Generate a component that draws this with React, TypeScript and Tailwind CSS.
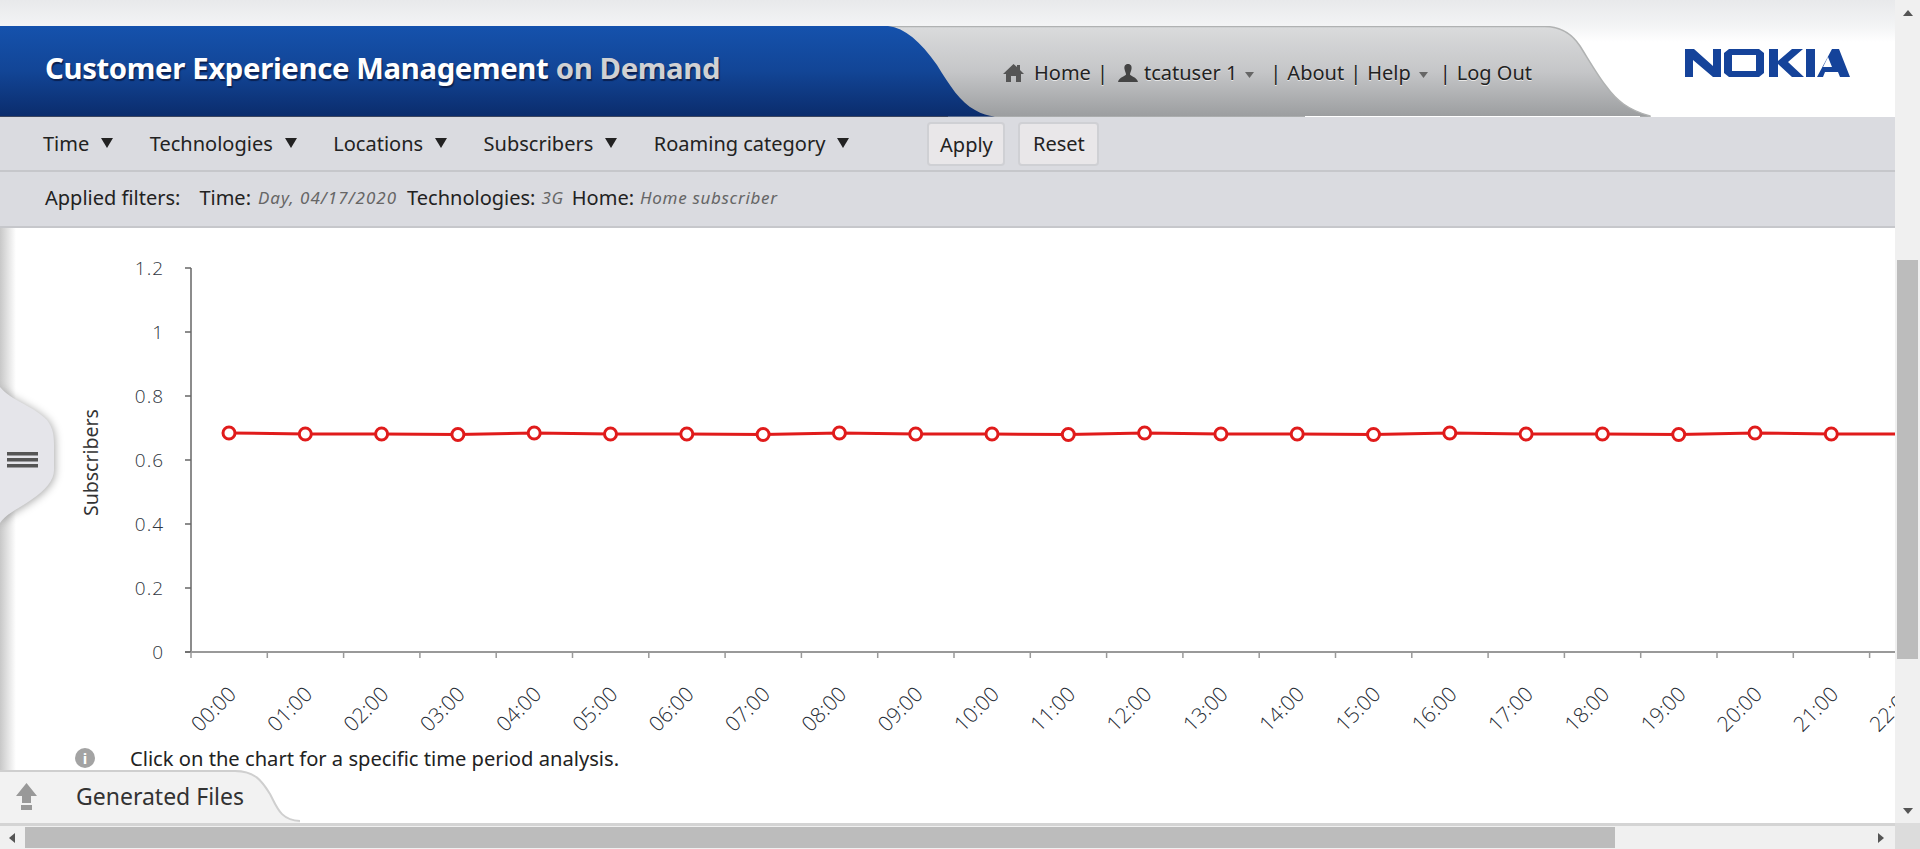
const font = "font-['Noto_Sans','Open_Sans',sans-serif]";

const hours = Array.from({ length: 23 }, (_, i) => `${String(i).padStart(2, "0")}:00`);
const yTicks = ["1.2", "1", "0.8", "0.6", "0.4", "0.2", "0"];
const wobble = [433, 434, 434, 434.5];
const menus = ["Time", "Technologies", "Locations", "Subscribers", "Roaming category"];

function Caret({ small }: { small?: boolean }) {
  return small ? (
    <svg className="ml-2 mt-1" width="9" height="6" viewBox="0 0 9 6">
      <path d="M0 0H9L4.5 6Z" fill="#666" />
    </svg>
  ) : (
    <svg className="ml-3 -mt-0.5" width="12" height="10" viewBox="0 0 12 10">
      <path d="M0 0H12L6 10Z" fill="#222" />
    </svg>
  );
}

function Arrow({ d, className }: { d: string; className?: string }) {
  return (
    <svg className={className} width="12" height="12" viewBox="0 0 12 12">
      <path d={d} fill="#555" />
    </svg>
  );
}

function HeaderShape() {
  return (
    <svg className="absolute inset-0" width="1895" height="91" viewBox="0 0 1895 91">
      <defs>
        <linearGradient id="blue" x1="0" y1="0" x2="0" y2="1">
          <stop offset="0" stopColor="#1552ad" />
          <stop offset="0.5" stopColor="#124596" />
          <stop offset="1" stopColor="#0b2c6c" />
        </linearGradient>
        <linearGradient id="grey" x1="0" y1="0" x2="0" y2="1">
          <stop offset="0" stopColor="#dadbdc" />
          <stop offset="0.5" stopColor="#c5c6c8" />
          <stop offset="1" stopColor="#9b9d9f" />
        </linearGradient>
      </defs>
      <path
        d="M880 .5H1545C1560 .5 1572 8 1580 20C1590 36 1598 50 1606 60C1616 74 1628 84 1650 90V91H880Z"
        fill="url(#grey)"
        stroke="#b0b2b2"
        strokeWidth="1.5"
      />
      <path
        d="M0 0H888C905 2 920 15 937 39C950 60 960 76 975 84C982 88 988 90 995 90.5H0Z"
        fill="url(#blue)"
      />
      <line x1="0" y1="90.5" x2="948" y2="90.5" stroke="#3c4660" />
      <line x1="1305" y1="90.5" x2="1640" y2="90.5" stroke="#fff" />
    </svg>
  );
}

function Chart() {
  const x = (i: number) => 229 + i * 76.3;
  const tick = (i: number) => 191 + i * 76.3;
  return (
    <svg className="block" width="1895" height="518" viewBox="0 228 1895 518">
      <line x1="191" y1="268" x2="191" y2="652" stroke="#666" strokeWidth="1.5" />
      <line x1="185" y1="652" x2="1895" y2="652" stroke="#999" strokeWidth="2" />
      {yTicks.map((t, i) => {
        const y = 268 + i * 64;
        return (
          <g key={t}>
            <line x1="185" y1={y} x2="191" y2={y} stroke="#666" strokeWidth="1.5" />
            <text x="164" y={y + 6.5} textAnchor="end" fontSize="19" letterSpacing="1" fontFamily="Open Sans" fontWeight="300" fill="#2f3640">
              {t}
            </text>
          </g>
        );
      })}
      {hours.map((_, i) => (
        <line key={i} x1={tick(i)} y1="652" x2={tick(i)} y2="658" stroke="#999" strokeWidth="1.5" />
      ))}
      {hours.map((h, i) => (
        <text
          key={h}
          transform={`translate(${tick(i) + 9} 733) rotate(-45)`}
          fontSize="21"
          fontFamily="Open Sans"
          fontWeight="300"
          fill="#262c35"
        >
          {h}
        </text>
      ))}
      <text transform="translate(98 516) rotate(-90)" fontSize="19.5" fontFamily="Noto Sans" fill="#333">
        Subscribers
      </text>
      <polyline
        points={`${hours.map((_, i) => `${x(i)},${wobble[i % 4]}`).join(" ")} 1895,434`}
        fill="none"
        stroke="#e01b1b"
        strokeWidth="3"
      />
      {hours.map((_, i) => (
        <circle key={i} cx={x(i)} cy={wobble[i % 4]} r="6" fill="#fff" stroke="#e01b1b" strokeWidth="3" />
      ))}
    </svg>
  );
}

function SideHandle() {
  return (
    <>
      <div className="absolute left-0 top-[228px] h-[546px] w-[16px] bg-gradient-to-r from-[#c8c8c8] to-transparent" />
      <svg
        className="absolute left-0 top-[380px] drop-shadow-[1px_1px_4px_rgba(0,0,0,0.35)]"
        width="64"
        height="150"
        viewBox="0 0 64 150"
      >
        <path
          d="M0 7C10 20 32 25 47 40C53 48 54 55 54 65V90C54 100 46 110 31 120C16 130 5 135 0 143Z"
          fill="#e5e5ea"
        />
        <rect x="7" y="72" width="31" height="3.5" fill="#555" />
        <rect x="7" y="78" width="31" height="3.5" fill="#555" />
        <rect x="7" y="84" width="31" height="3.5" fill="#555" />
      </svg>
    </>
  );
}

function FilesTab() {
  return (
    <div className="absolute bottom-[26px] left-0 flex h-[53px] w-[310px] items-center">
      <svg className="absolute inset-0" width="310" height="53" viewBox="0 0 310 53">
        <path d="M0 1H235C255 1 262 11 270 24C277 37 280 50 300 51V53H0Z" fill="#f2f2f2" />
        <path d="M0 1H235C255 1 262 11 270 24C277 37 280 50 300 51" fill="none" stroke="#cfcfcf" strokeWidth="2" />
        <path d="M26.5 13L37 26H31V33H22V26H16Z" fill="#999" />
        <rect x="21" y="35" width="11" height="5" fill="#999" />
      </svg>
      <span className="relative ml-[76px] text-[23px] text-[#333]">Generated Files</span>
    </div>
  );
}

export default function App() {
  return (
    <div className={`${font} relative flex h-[849px] w-[1920px] overflow-hidden bg-white text-[#222]`}>
      <div className="relative flex w-[1895px] flex-col">
        <div className="h-[26px] bg-gradient-to-b from-[#e8e9eb] to-[#f3f4f5]" />
        <header className="relative flex h-[91px] items-center bg-[linear-gradient(#f3f4f5,#fff_16px)]">
          <HeaderShape />
          <h1 className="relative mb-[6px] ml-[45px] text-[29.3px] font-bold leading-none tracking-[-0.35px] text-white [text-shadow:1px_2px_1px_#0a2050]">
            Customer Experience Management <span className="text-[#d0d1d3]">on Demand</span>
          </h1>
          <nav className="absolute left-[1003px] top-[37px] flex items-center text-[20px] leading-none text-[#222] [text-shadow:0_1px_0_#e8e8e8]">
            <svg className="mr-[10px]" width="21" height="20" viewBox="0 0 21 20">
              <path d="M10.5 1L14 4V2H17V7L21 11H18V19H13V13H8V19H3V11H0Z" fill="#555" />
            </svg>
            Home <span className="mx-1.5">|</span>
            <svg className="ml-[4px] mr-[6px]" width="20" height="20" viewBox="0 0 20 20">
              <path d="M10 1C13 1 14 3.5 13.5 6C13 8.5 12 10 12 11.5C12 13 19 14 20 19H0C1 14 8 13 8 11.5C8 10 7 8.5 6.5 6C6 3.5 7 1 10 1Z" fill="#444" />
            </svg>
            tcatuser 1 <Caret small />
            <span className="ml-4 mr-1.5">|</span> About <span className="mx-1.5">|</span> Help <Caret small />
            <span className="ml-3 mr-1.5">|</span> Log Out
          </nav>
          <svg className="absolute left-[1685px] top-[23px]" width="165" height="28" viewBox="0 0 165 28">
            <g fill="#15439a">
              <path d="M0 28V0h9l19 17V0h8v28h-8L8 11v17z" />
              <path fillRule="evenodd" d="M44 0h30l5 4v20l-5 4H44l-5-4V4zM47 6v16h24V6z" />
              <path d="M84 0h9v12L107 0h11l-15 13 16 15h-12L93 15v13h-9z" />
              <path d="M121 0h9v28h-9z" />
              <path d="M147 0h7l11 28h-10l-2-5h-13l-2 5h-6zM143 8l-5 10h9z" />
            </g>
          </svg>
        </header>
        <div className="flex h-[55px] items-center border-b-2 border-[#c6c7cb] bg-[#dadbe0] pl-[43px] text-[20px]">
          {menus.map((m, i) => (
            <span key={m} className={`flex items-center ${i > 0 ? "ml-[36.5px]" : ""}`}>
              {m}
              <Caret />
            </span>
          ))}
          <button className="ml-[78px] flex h-[44px] w-[78px] items-center justify-center rounded-sm border-2 border-[#cfd0d4] bg-[#e9e7e9] pt-[3px]">
            Apply
          </button>
          <button className="ml-[13px] flex h-[44px] w-[81px] items-center justify-center rounded-sm border-2 border-[#cfd0d4] bg-[#e9e7e9]">
            Reset
          </button>
        </div>
        <div className="flex h-[56px] items-center border-b-2 border-[#c6c7cb] bg-[#dadbe0] pb-[3px] pl-[45px] text-[20px]">
          Applied filters:
          <span className="ml-[19px]">Time:</span>
          <em className="ml-[7px] text-[17px] tracking-[1px] text-[#666]">Day, 04/17/2020</em>
          <span className="ml-[10px]">Technologies:</span>
          <em className="ml-1.5 text-[17px] tracking-[0.7px] text-[#666]">3G</em>
          <span className="ml-2">Home:</span>
          <em className="ml-1.5 text-[17px] tracking-[0.7px] text-[#666]">Home subscriber</em>
        </div>
        <main className="flex-1 overflow-hidden">
          <Chart />
          <div className="flex h-[24px] items-center pl-[75px] text-[20.15px]">
            <span className="flex size-5 items-center justify-center rounded-full bg-[#a3a3a3] text-[15px] font-bold text-white">i</span>
            <span className="ml-[35px]">Click on the chart for a specific time period analysis.</span>
          </div>
        </main>
        <SideHandle />
        <FilesTab />
        <div className="relative flex h-[26px] items-center border-t-[3px] border-[#d4d4d4] bg-[#f0f0f0]">
          <Arrow className="ml-1.5" d="M9 1V11L3 6Z" />
          <div className="ml-[7px] h-[21px] w-[1590px] bg-[#bcbcbc]" />
          <Arrow className="ml-auto mr-2" d="M3 1V11L9 6Z" />
        </div>
      </div>
      <aside className="relative flex w-[25px] flex-col items-center bg-[#f0f0f0]">
        <Arrow className="mt-[7px]" d="M1 9H11L6 3Z" />
        <div className="absolute right-[2px] top-[260px] h-[399px] w-[21px] bg-[#bcbcbc]" />
        <Arrow className="absolute right-[6px] top-[805px]" d="M1 3H11L6 9Z" />
        <div className="absolute bottom-0 right-0 h-[26px] w-[25px] bg-[#dcdcdc]" />
      </aside>
    </div>
  );
}
